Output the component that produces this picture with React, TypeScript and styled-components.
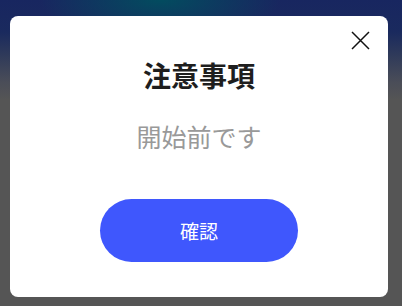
import React from 'react'
import styled, { createGlobalStyle } from 'styled-components'

const GlobalStyle = createGlobalStyle`
    html, body {
        margin: 0;
        padding: 0;
    }
    body {
        font-family: 'Noto Sans CJK JP', 'Noto Sans', sans-serif;
    }
`

const Backdrop = styled.div`
    width: 402px;
    height: 306px;
    box-sizing: border-box;
    padding: 16px 14px 9px 10px;
    background:
        radial-gradient(ellipse 120px 40px at 160px 0px, rgba(0, 80, 95, 0.9), rgba(0, 80, 95, 0) 100%),
        linear-gradient(to bottom, #182660 0px, #1a2a5e 32px, #2f3a5a 55px, #4a4d58 82px, #555555 100px, #555555 100%);
    overflow: hidden;
`

const Dialog = styled.div`
    position: relative;
    width: 378px;
    height: 281px;
    box-sizing: border-box;
    background: #ffffff;
    border-radius: 8px;
    padding-top: 41px;
    display: flex;
    flex-direction: column;
    align-items: center;
`

const CloseButton = styled.button`
    position: absolute;
    top: 14px;
    right: 17px;
    width: 21px;
    height: 21px;
    padding: 0;
    border: 0;
    background: none;
    cursor: pointer;
    display: flex;
    align-items: center;
    justify-content: center;
`

const Title = styled.h2`
    margin: 0;
    font-size: 28px;
    line-height: 36px;
    font-weight: 700;
    color: #1e1e1e;
`

const Message = styled.p`
    margin: 25px 0 0;
    font-size: 25px;
    line-height: 36px;
    font-weight: 400;
    color: #999999;
`

const ConfirmButton = styled.button`
    margin-top: 45px;
    width: 198px;
    height: 63px;
    border: 0;
    border-radius: 32px;
    background: #3f57fd;
    color: #ffffff;
    font-family: inherit;
    font-size: 19px;
    cursor: pointer;
`

export default function App(): JSX.Element {
    return (
        <>
            <GlobalStyle />
            <Backdrop>
                <Dialog>
                    <CloseButton aria-label="閉じる">
                        <svg width="19" height="19" viewBox="0 0 19 19">
                            <path d="M1 1 L18 18 M18 1 L1 18" stroke="#111" strokeWidth="1.5" fill="none" />
                        </svg>
                    </CloseButton>
                    <Title>注意事項</Title>
                    <Message>開始前です</Message>
                    <ConfirmButton>確認</ConfirmButton>
                </Dialog>
            </Backdrop>
        </>
    )
}
